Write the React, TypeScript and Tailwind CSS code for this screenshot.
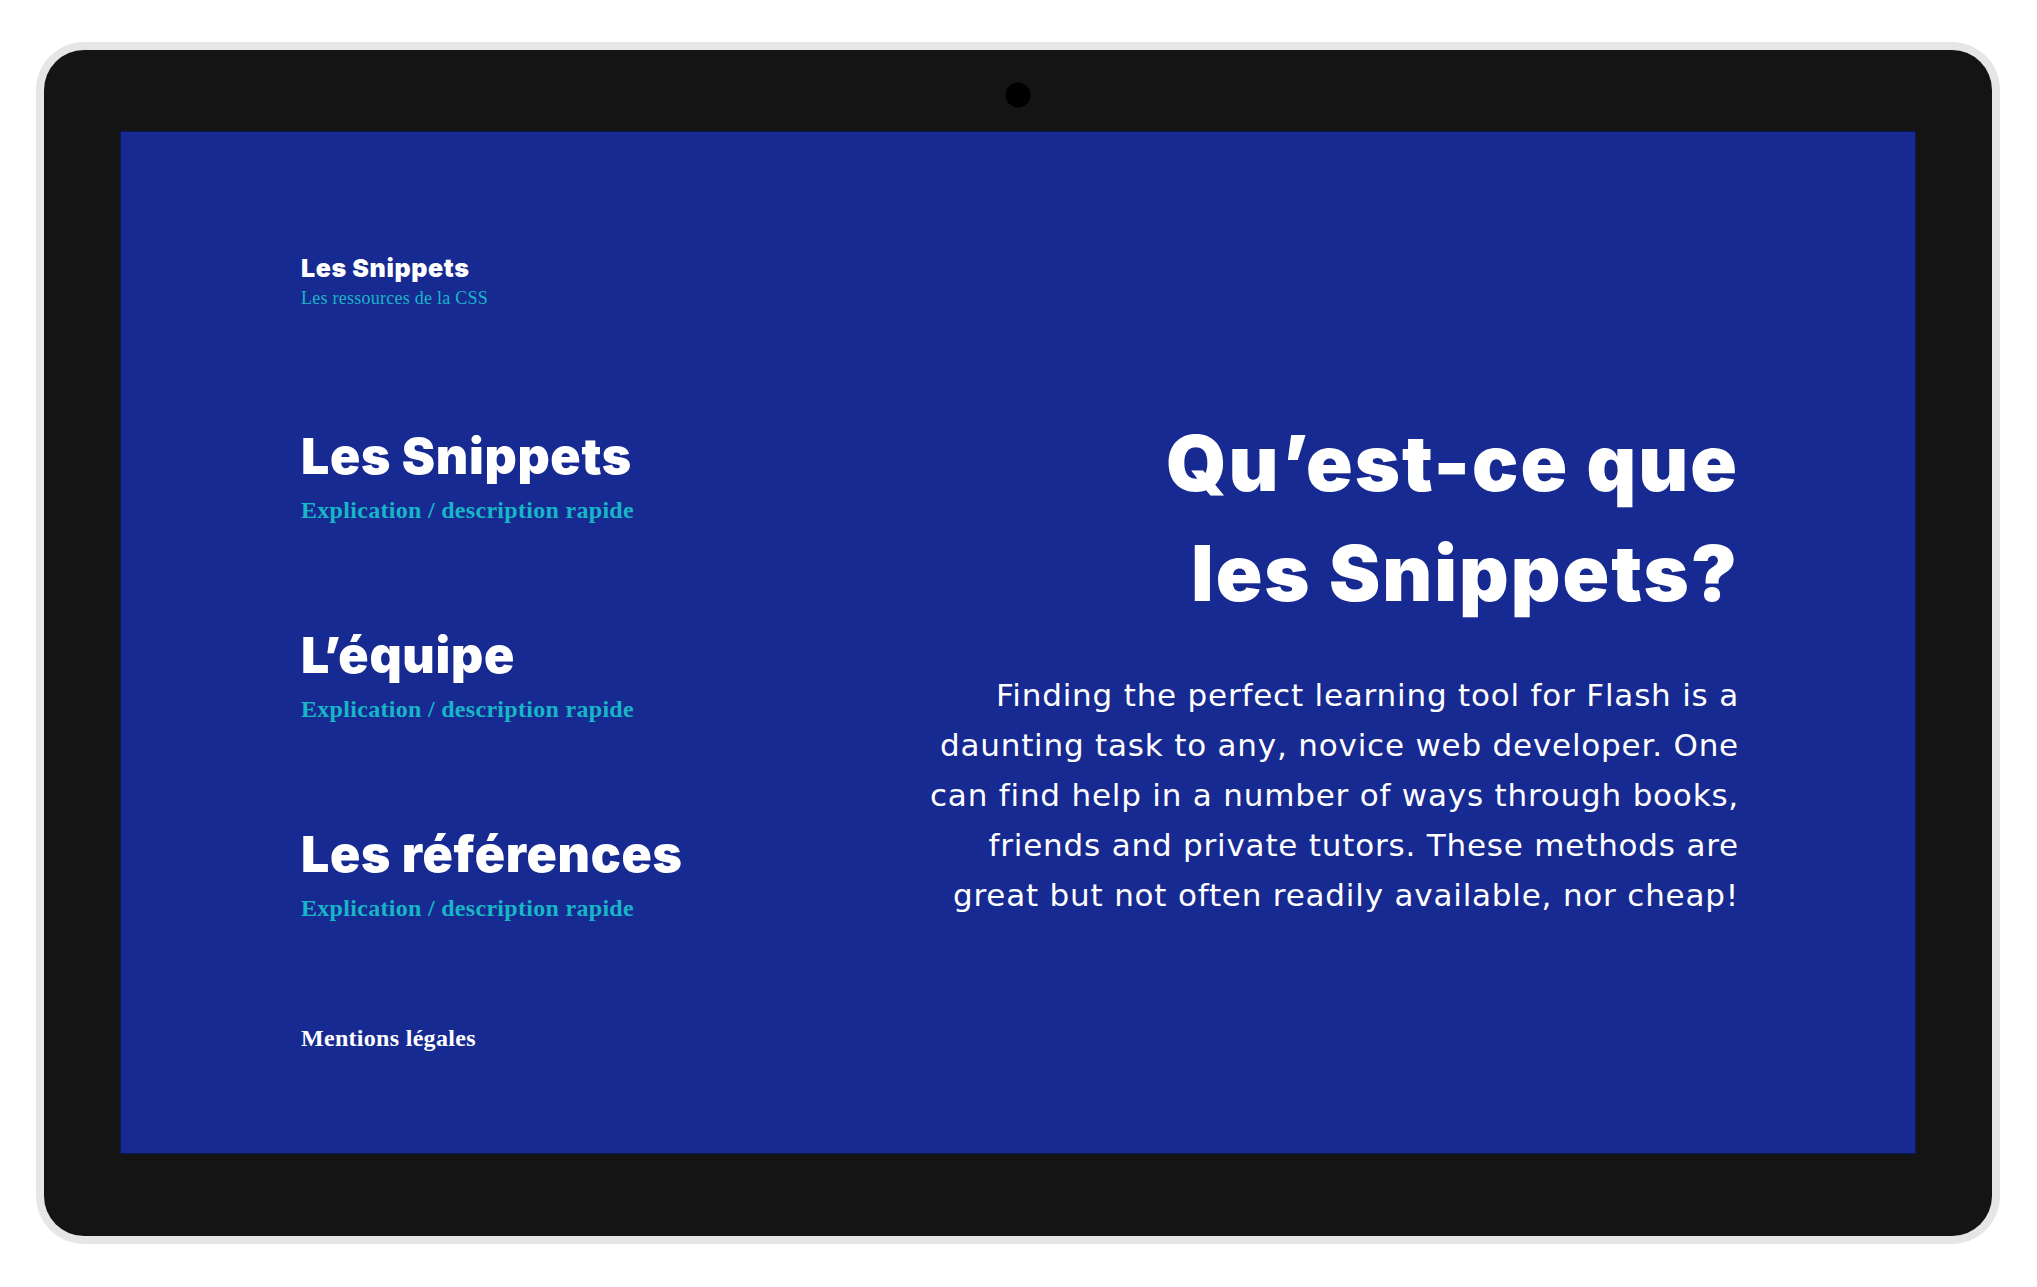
import React from "react";

const heading = "font-['Inter',sans-serif] font-black text-white";
const serif = "font-['Liberation_Serif',serif]";

function NavItem({ title, first }: { title: string; first?: boolean }) {
  return (
    <div className={first ? "mt-[124px]" : "mt-[108px]"}>
      <div className={`${heading} text-[50px] leading-[50px] tracking-[0.7px]`}>{title}</div>
      <div className={`${serif} mt-[17px] text-[24px] leading-[24px] font-semibold tracking-[0.3px] text-[#17b6c6]`}>
        Explication / description rapide
      </div>
    </div>
  );
}

export default function App() {
  return (
    <div className="w-[2037px] h-[1287px] bg-white pl-[36px] pt-[42px]">
      <div className="w-[1964px] h-[1202px] rounded-[48px] bg-[#e6e6e6] p-[8px]">
        <div className="relative h-full w-full rounded-[40px] bg-[#141414] pl-[76px] pr-[76px] pt-[81px] pb-[82px]">
          <div className="absolute left-1/2 top-[45px] h-[25px] w-[25px] -translate-x-1/2 -translate-y-1/2 rounded-full bg-black" />
          <div className="flex h-full w-full justify-between border border-[#0c1756] bg-[#172a92] pl-[180px] pr-[176px] pt-[124px]">
            <div className="flex flex-col">
              <div className={`${heading} text-[25px] leading-[24px] tracking-[0.6px]`}>Les Snippets</div>
              <div className={`${serif} mt-[9px] text-[18px] leading-[18px] tracking-[0.25px] text-[#17b6c6]`}>
                Les ressources de la CSS
              </div>
              <NavItem title="Les Snippets" first />
              <NavItem title="L’équipe" />
              <NavItem title="Les références" />
              <div className={`${serif} mt-[106px] text-[24px] leading-[24px] font-semibold tracking-[0.3px] text-white`}>
                Mentions légales
              </div>
            </div>
            <div className="flex flex-col items-end pt-[152px] text-right">
              <h1 className={`${heading} text-[77px] leading-[110px] tracking-[2px]`}>
                Qu’est-ce que
                <br />
                les Snippets?
              </h1>
              <p className="mt-[42px] font-['DejaVu_Sans',sans-serif] text-[31px] font-normal leading-[50px] tracking-[0.8px] text-white">
                Finding the perfect learning tool for Flash is a
                <br />
                daunting task to any, novice web developer. One
                <br />
                can find help in a number of ways through books,
                <br />
                friends and private tutors. These methods are
                <br />
                great but not often readily available, nor cheap!
              </p>
            </div>
          </div>
        </div>
      </div>
    </div>
  );
}
